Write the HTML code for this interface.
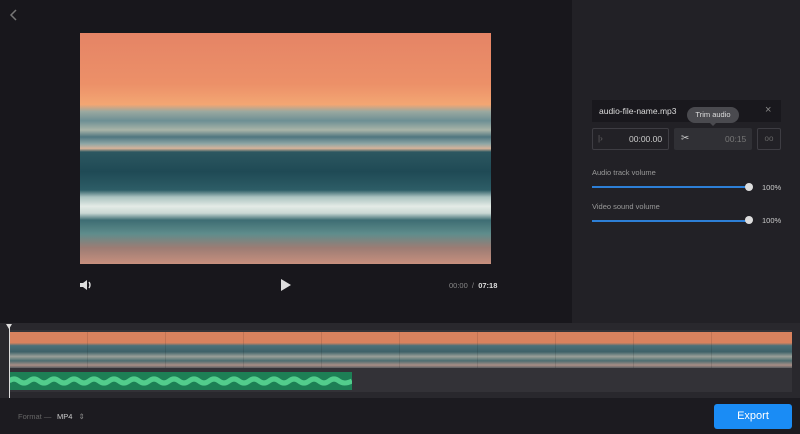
<!DOCTYPE html>
<html><head><style>
*{margin:0;padding:0;box-sizing:border-box}
body{width:800px;height:434px;overflow:hidden;background:#18171c;font-family:"Liberation Sans",sans-serif;position:relative;color:#ddd}
.abs{position:absolute}
.video{left:80px;top:33px;width:411px;height:231px;background:linear-gradient(180deg,#e58466 0%,#ec9068 22%,#f3a673 31%,#9aa8a0 34%,#6d8f94 38%,#a9b4a8 42%,#4f7680 45%,#8fa7a6 48%,#d8b49a 50%,#2c5760 51.5%,#1f4a55 60%,#2d5d66 68%,#aac2c0 71%,#e4ebe6 75%,#c9d7d3 78%,#3e6d73 81%,#5f8d8c 87%,#9c7c74 93%,#c8907e 100%)}
.thumb{height:36px;top:332px;left:9px;width:783px;background:linear-gradient(180deg,#d9825e 0%,#d9825e 30%,#4c7078 38%,#3e6168 55%,#9a9f98 68%,#4d6d70 80%,#a88e86 92%,#5a5e62 100%)}
.tick{position:absolute;top:0;width:1px;height:36px;background:rgba(0,0,0,.1)}
</style></head><body>
<div class="abs" style="left:572px;top:0;width:228px;height:323px;background:#222126"></div>
<svg class="abs" style="left:9px;top:9px" width="10" height="12"><path d="M7 1L2 6l5 5" stroke="#777" stroke-width="1.5" fill="none"/></svg>
<div class="abs video"></div>
<svg class="abs" style="left:79px;top:279px" width="14" height="12"><path d="M1 4h3l4-3v10L4 8H1z" fill="#ddd"/><path d="M10 3q2 3 0 6" stroke="#ddd" stroke-width="1.4" fill="none"/></svg>
<svg class="abs" style="left:280px;top:278px" width="12" height="14"><path d="M1 1l10 6-10 6z" fill="#ddd"/></svg>
<div class="abs" style="left:449px;top:281px;font-size:7.5px;color:#888">00:00 &nbsp;/&nbsp; <b style="color:#ddd">07:18</b></div>

<div class="abs" style="left:592px;top:100px;width:189px;height:22px;background:#19181d"></div>
<div class="abs" style="left:599px;top:106px;font-size:8.5px;color:#ddd">audio-file-name.mp3</div>
<div class="abs" style="left:765px;top:104px;font-size:11px;color:#888">×</div>
<div class="abs" style="left:687px;top:107px;width:52px;height:16px;border-radius:8px;background:#4a4a4f;font-size:7.5px;color:#ddd;text-align:center;line-height:16px">Trim audio</div>
<div class="abs" style="left:709px;top:122px;border:4px solid transparent;border-top-color:#4a4a4f;border-bottom:0"></div>
<div class="abs" style="left:592px;top:128px;width:77px;height:22px;border:1px solid #3e3d43;border-radius:2px"></div>
<div class="abs" style="left:598px;top:134px;font-size:8px;color:#666">|›</div>
<div class="abs" style="left:629px;top:134px;font-size:8.5px;color:#ccc">00:00.00</div>
<div class="abs" style="left:674px;top:128px;width:78px;height:22px;background:#303035;border-radius:2px"></div>
<div class="abs" style="left:681px;top:133px;font-size:10px;color:#ccc">✂</div>
<div class="abs" style="left:725px;top:134px;font-size:8.5px;color:#777">00:15</div>
<div class="abs" style="left:757px;top:128px;width:24px;height:22px;border:1px solid #3e3d43;border-radius:2px;font-size:8px;color:#666;text-align:center;line-height:20px">oo</div>
<div class="abs" style="left:592px;top:168px;font-size:7.5px;color:#999">Audio track volume</div>
<div class="abs" style="left:592px;top:186px;width:156px;height:2px;background:#2d7fd6"></div>
<div class="abs" style="left:745px;top:183px;width:8px;height:8px;border-radius:50%;background:#ddd"></div>
<div class="abs" style="left:762px;top:183px;font-size:7.5px;color:#ccc">100%</div>
<div class="abs" style="left:592px;top:202px;font-size:7.5px;color:#999">Video sound volume</div>
<div class="abs" style="left:592px;top:220px;width:156px;height:2px;background:#2d7fd6"></div>
<div class="abs" style="left:745px;top:216px;width:8px;height:8px;border-radius:50%;background:#ddd"></div>
<div class="abs" style="left:762px;top:216px;font-size:7.5px;color:#ccc">100%</div>

<div class="abs" style="left:0;top:323px;width:800px;height:75px;background:#29282d"></div>
<div class="abs" style="left:9px;top:330px;width:783px;height:62px;background:#333237"></div>
<div class="abs thumb"><div class="tick" style="left:78px"></div><div class="tick" style="left:156px"></div><div class="tick" style="left:234px"></div><div class="tick" style="left:312px"></div><div class="tick" style="left:390px"></div><div class="tick" style="left:468px"></div><div class="tick" style="left:546px"></div><div class="tick" style="left:624px"></div><div class="tick" style="left:702px"></div></div>
<div class="abs" style="left:9px;top:372px;width:343px;height:18px;background:#1d7f55"></div>
<svg class="abs" style="left:9px;top:372px" width="343" height="18"><path d="M0 9 Q5 5 10 9 T20 9 T30 9 T40 9 T50 9 T60 9 T70 9 T80 9 T90 9 T100 9 T110 9 T120 9 T130 9 T140 9 T150 9 T160 9 T170 9 T180 9 T190 9 T200 9 T210 9 T220 9 T230 9 T240 9 T250 9 T260 9 T270 9 T280 9 T290 9 T300 9 T310 9 T320 9 T330 9 T343 9" stroke="#52cd8c" stroke-width="5" fill="none"/></svg>
<div class="abs" style="left:9px;top:326px;width:1px;height:72px;background:#ddd"></div>
<div class="abs" style="left:6px;top:324px;border:3.5px solid transparent;border-top:5px solid #ddd;border-bottom:0"></div>

<div class="abs" style="left:0;top:398px;width:800px;height:36px;background:#1c1b20"></div>
<div class="abs" style="left:18px;top:412px;font-size:7.5px;color:#666">Format —</div>
<div class="abs" style="left:57px;top:412px;font-size:7.5px;color:#ccc">MP4 <span style="color:#888;margin-left:4px">⇕</span></div>
<div class="abs" style="left:714px;top:404px;width:78px;height:25px;background:#1a8cf5;border-radius:3px;color:#fff;font-size:11px;text-align:center;line-height:25px">Export</div>
</body></html>
